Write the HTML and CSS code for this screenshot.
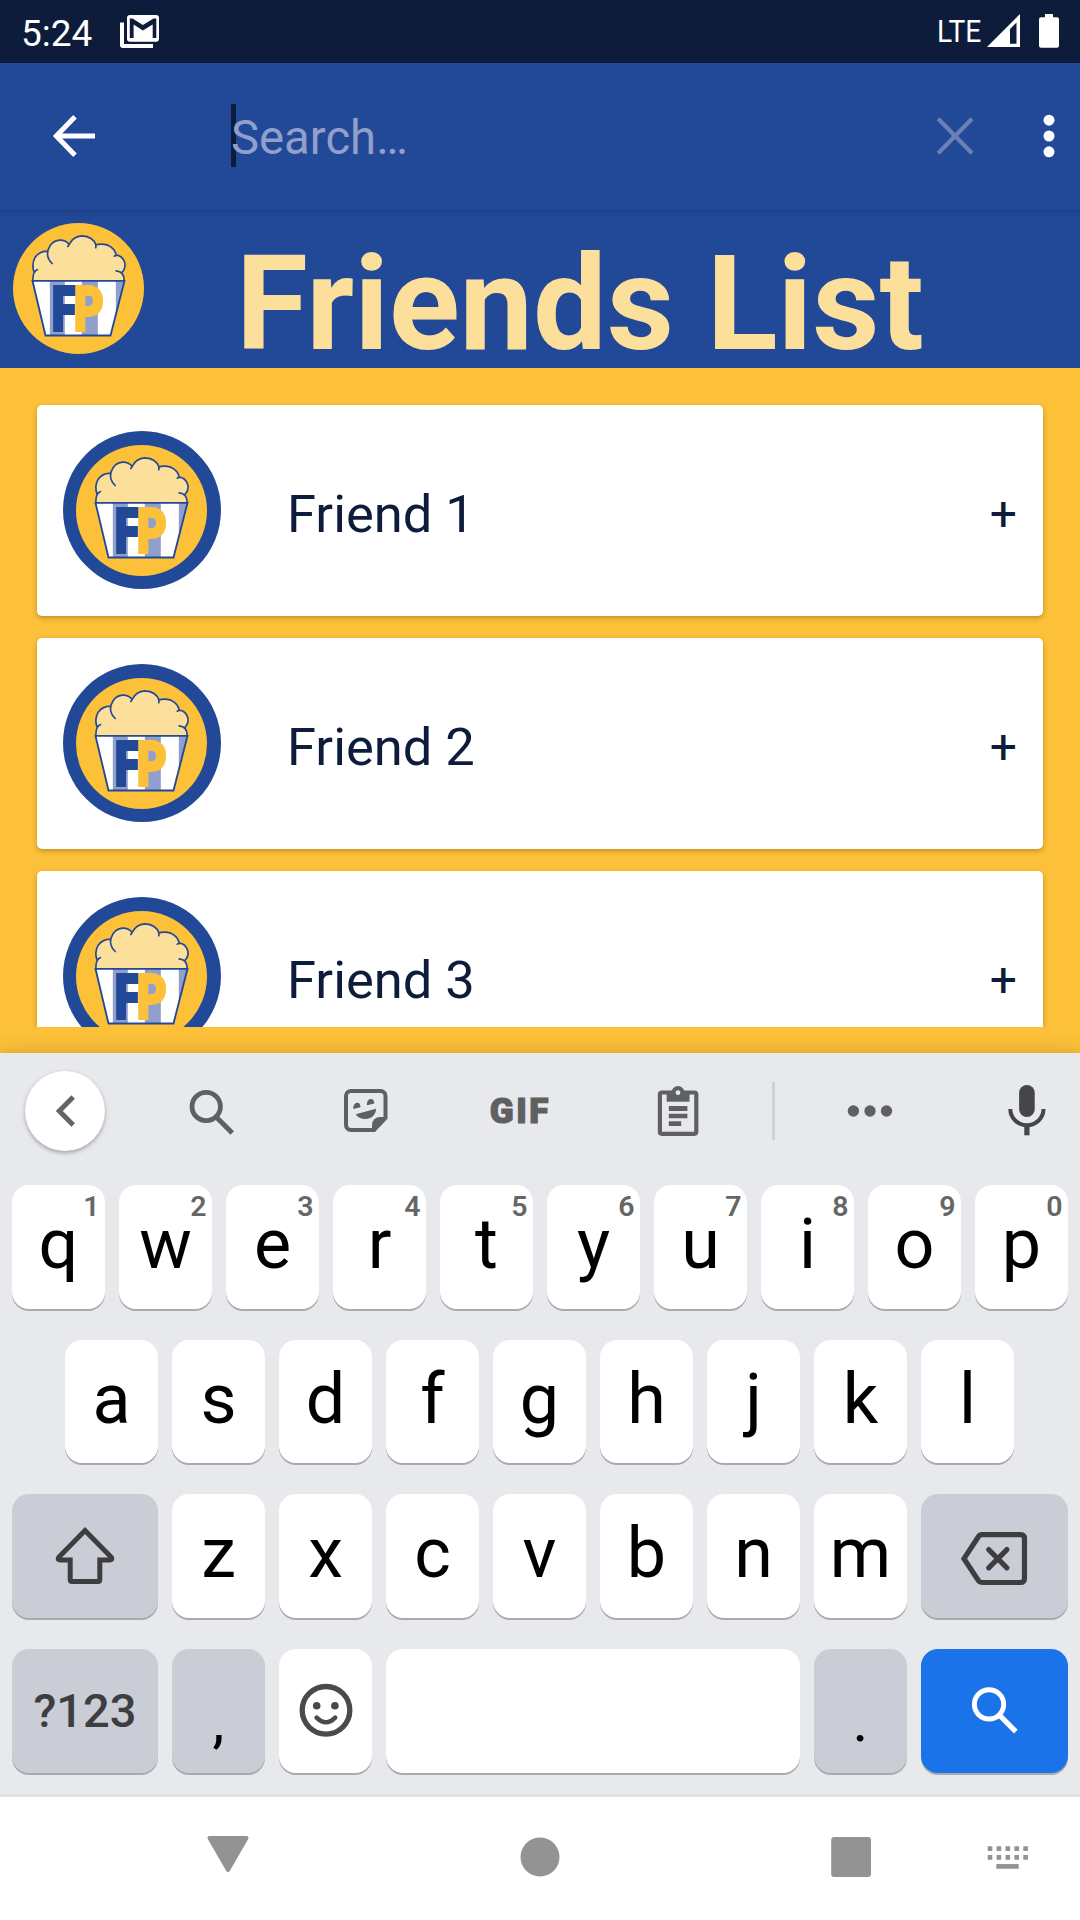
FILE: index.html
```html
<!DOCTYPE html>
<html lang="en">
<head>
<meta charset="utf-8">
<title>Friends List</title>
<link rel="stylesheet" href="styles.css">
</head>
<body>
<svg class="defs" width="0" height="0" aria-hidden="true">
  <defs>
    <clipPath id="bucket"><path d="M98 229H374L332 393H137Z"/></clipPath>
    <symbol id="logo" viewBox="39.5 55.5 393 393">
      <circle cx="236" cy="252" r="196.5" fill="#fcc139"/>
      <path d="M99 228Q99 212 103 204Q94 180 106 158Q120 140 143 140Q148 116 172 108Q194 105 208 121Q220 95 246 94Q280 96 288 121Q305 116 324 122Q346 132 349 153Q368 153 375 175Q378 193 365 206Q374 214 373 228Z" fill="#fddf9c"/>
      <g fill="none" stroke="#224898" stroke-width="5" stroke-linecap="round" stroke-linejoin="round">
        <path d="M99 228Q99 200 113 195M103 204Q94 180 106 158Q120 140 143 140M157 177Q138 160 145 136Q153 110 178 107Q198 106 208 120L204 126M208 120Q220 95 246 94Q280 96 288 121V130M288 121Q305 116 324 122Q346 132 349 152L343 155M349 152Q368 153 375 175Q378 193 365 205M349 199Q373 201 373 228"/>
      </g>
      <g clip-path="url(#bucket)">
        <path d="M98 229H374V393H98Z" fill="#fff"/>
        <path d="M150 229H195V393H150ZM246 229H294V393H246ZM348 229H374V393H348Z" fill="#919fcd"/>
      </g>
      <g class="logo-letters">
        <text transform="translate(154 375) scale(.76 1)" font-size="179" fill="#224898" stroke="#224898" stroke-width="12">F</text>
        <text transform="translate(220 375) scale(.78 1)" font-size="179" fill="#fcc139" stroke="#fcc139" stroke-width="12">P</text>
      </g>
      <path d="M98 229H374L332 393H137Z" fill="none" stroke="#224898" stroke-width="5.500"/>
    </symbol>
    <symbol id="lens" viewBox="0 0 64 64">
      <circle cx="26.200" cy="27.500" r="14.200" fill="none" stroke="currentColor" stroke-width="4.800"/>
      <path d="M36 37.700L52.200 54" fill="none" stroke="currentColor" stroke-width="5"/>
    </symbol>
  </defs>
</svg>

<div class="screen">
  <header class="status-bar">
    <span class="clock">5:24</span>
    <svg class="mail" width="40" height="34" viewBox="0 0 40 34">
      <path d="M0 7.500H4V29H33V33H3Q0 33 0 30Z" fill="#fff"/>
      <rect x="7" y="0" width="32" height="26.700" rx="3" fill="#fff"/>
      <path d="M9.800 23V3.500H12.500L22.900 10L33.500 3.500H36.300V23H32.700V9.500L22.900 15.500L13.600 9.500V23Z" fill="#0d1c3a"/>
    </svg>
    <span class="network">LTE</span>
    <svg class="signal" width="33" height="33" viewBox="0 0 33 33">
      <path d="M0 33H33V0ZM23 29.700V15L29.500 8.500V29.700Z" fill="#fff" fill-rule="evenodd"/>
    </svg>
    <svg class="battery" width="20" height="34" viewBox="0 0 20 34">
      <path d="M6 0H14V3.300H18Q20 3.300 20 5.300V31.700Q20 33.700 18 33.700H2Q0 33.700 0 31.700V5.300Q0 3.300 2 3.300H6Z" fill="#fff"/>
    </svg>
  </header>

  <div class="app-bar">
    <svg class="back" width="48" height="48" viewBox="0 0 48 48">
      <path d="M45 24H7M25 4.800L6.300 24L25 43.200" fill="none" stroke="#fff" stroke-width="5"/>
    </svg>
    <div class="search-field"><span class="caret"></span><span class="placeholder">Search…</span></div>
    <svg class="clear" width="48" height="48" viewBox="0 0 48 48">
      <path d="M7.200 6.700L41 41.300M41 6.700L7.200 41.300" fill="none" stroke="#6a80b7" stroke-width="4.200"/>
    </svg>
    <svg class="more" width="16" height="48" viewBox="0 0 16 48" fill="#fff">
      <circle cx="8" cy="8.200" r="5.500"/><circle cx="8" cy="24" r="5.500"/><circle cx="8" cy="39.800" r="5.500"/>
    </svg>
  </div>

  <div class="title-band">
    <svg class="brand" width="131" height="131"><use href="#logo"/></svg>
    <h1>Friends List</h1>
  </div>

  <main class="friends">
    <div class="list">
      <article class="card">
        <span class="avatar"><svg width="131" height="131"><use href="#logo"/></svg></span>
        <span class="name">Friend 1</span><span class="add">+</span>
      </article>
      <article class="card">
        <span class="avatar"><svg width="131" height="131"><use href="#logo"/></svg></span>
        <span class="name">Friend 2</span><span class="add">+</span>
      </article>
      <article class="card">
        <span class="avatar"><svg width="131" height="131"><use href="#logo"/></svg></span>
        <span class="name">Friend 3</span><span class="add">+</span>
      </article>
    </div>
  </main>

  <section class="keyboard">
    <div class="tools">
      <span class="collapse">
        <svg width="64" height="64" viewBox="0 0 64 64"><path d="M40.200 18L26.300 32L40.200 46" fill="none" stroke="#636466" stroke-width="5"/></svg>
      </span>
      <svg class="find" width="64" height="64"><use href="#lens"/></svg>
      <svg width="64" height="64" viewBox="0 0 64 64" fill="currentColor">
        <path d="M17 12H46.500a5 5 0 0 1 5 5V39L40 51H17a5 5 0 0 1-5-5V17a5 5 0 0 1 5-5Z" fill="none" stroke="currentColor" stroke-width="4"/>
        <path d="M38 52V46A8 8 0 0 1 46 38H53L40.700 53Z"/>
        <path d="M19.300 30C19 26 21 23.700 23.500 23.700C25.500 23.700 26.500 25.500 26.500 28.300ZM33 26.300C32.500 22.500 34.500 20 37 20C39 20 40.300 21.700 40.300 24.500Z"/>
        <path d="M21.700 35.300L42 29.700C42 36 37 40 31.500 40C27 40 23.500 38.500 21.700 35.300Z"/>
      </svg>
      <span class="gif">GIF</span>
      <svg width="64" height="64" viewBox="0 0 64 64" fill="currentColor">
        <rect x="13.900" y="13.500" width="36.400" height="41.300" rx="2" fill="none" stroke="currentColor" stroke-width="4.200"/>
        <path d="M20.700 12H43.500V22.700H20.700Z"/><circle cx="32" cy="13.500" r="6.500"/>
        <circle cx="32" cy="13.700" r="2.400" fill="#e8e9ed"/>
        <path d="M22.800 27H41.400V32H22.800ZM22.800 34.700H41.400V39.300H22.800ZM22.800 42.300H35.200V47H22.800Z"/>
      </svg>
      <span class="divider"></span>
      <svg width="64" height="64" viewBox="0 0 64 64" fill="currentColor">
        <circle cx="15.400" cy="32" r="5.700"/><circle cx="32" cy="32" r="5.700"/><circle cx="48.500" cy="32" r="5.700"/>
      </svg>
      <svg class="mic" width="64" height="64" viewBox="0 0 64 64">
        <rect x="24.100" y="6" width="15.600" height="32" rx="7.800" fill="currentColor"/>
        <path d="M15.300 30A16.600 16.200 0 0 0 48.500 30" fill="none" stroke="currentColor" stroke-width="4"/>
        <path d="M29.300 45H34.500V56.300H29.300Z" fill="currentColor"/>
      </svg>
    </div>

    <div class="keys">
      <div class="row">
        <span class="key">q<sup>1</sup></span><span class="key">w<sup>2</sup></span><span class="key">e<sup>3</sup></span><span class="key">r<sup>4</sup></span><span class="key">t<sup>5</sup></span><span class="key">y<sup>6</sup></span><span class="key">u<sup>7</sup></span><span class="key">i<sup>8</sup></span><span class="key">o<sup>9</sup></span><span class="key">p<sup>0</sup></span>
      </div>
      <div class="row home">
        <span class="key">a</span><span class="key">s</span><span class="key">d</span><span class="key">f</span><span class="key">g</span><span class="key">h</span><span class="key">j</span><span class="key">k</span><span class="key">l</span>
      </div>
      <div class="row">
        <span class="key wide grey">
          <svg width="64" height="64" viewBox="0 0 64 64"><path d="M32 6.500L58.300 33.200Q60 36 57 36H46.800V55.500Q46.800 57.500 44.800 57.500H19.200Q17.200 57.500 17.200 55.500V36H7Q4 36 5.700 33.200Z" fill="none" stroke="#3e3e40" stroke-width="5"/></svg>
        </span>
        <span class="key">z</span><span class="key">x</span><span class="key">c</span><span class="key">v</span><span class="key">b</span><span class="key">n</span><span class="key">m</span>
        <span class="key wide grey">
          <svg width="72" height="64" viewBox="0 0 72 64" fill="none" stroke="#3e3e40" stroke-width="5.200"><path d="M5 34.700L19.500 12.500Q20.700 10.700 23 10.700H61.500Q65.500 10.700 65.500 14.700V54.500Q65.500 58.500 61.500 58.500H23Q20.700 58.500 19.500 56.800Z"/><path d="M29.700 25.600L47.900 43.800M47.900 25.600L29.700 43.800" stroke-linecap="round"/></svg>
        </span>
      </div>
      <div class="row">
        <span class="key wide grey symbols">?123</span>
        <span class="key grey punct">,</span>
        <span class="key">
          <svg width="64" height="64" viewBox="0 0 64 64" fill="#4a4a4a"><circle cx="32" cy="31.300" r="23.800" fill="none" stroke="#4a4a4a" stroke-width="5.300"/><circle cx="22.700" cy="26.700" r="3.800"/><circle cx="40.900" cy="26.700" r="3.800"/><path d="M22.600 38.700Q32 48 41.200 38.700" fill="none" stroke="#4a4a4a" stroke-width="4.500" stroke-linecap="round"/></svg>
        </span>
        <span class="key space"></span>
        <span class="key grey punct">.</span>
        <span class="key wide go"><svg width="66" height="66"><use href="#lens"/></svg></span>
      </div>
    </div>
  </section>

  <nav class="nav-bar">
    <svg width="64" height="64" viewBox="0 0 64 64"><path d="M13.500 13H50.500L32 45Z" fill="#939393" stroke="#939393" stroke-width="4" stroke-linejoin="round"/></svg>
    <svg width="64" height="64" viewBox="0 0 64 64"><circle cx="32" cy="32" r="19.500" fill="#939393"/></svg>
    <svg class="recents" width="64" height="64" viewBox="0 0 64 64"><rect x="12.200" y="12" width="39.800" height="40" rx="3" fill="#939393"/></svg>
    <svg class="ime" width="64" height="64" viewBox="0 0 64 64"><path d="M11.700 23.600H52M11.700 32.400H52" stroke="#939393" stroke-width="4.700" stroke-dasharray="4.600 4.300"/><path d="M20.300 41.400H42.700" stroke="#939393" stroke-width="4.700"/></svg>
  </nav>
</div>
</body>
</html>
```
FILE: styles.css
```css
* { box-sizing: border-box; }

body {
  margin: 0;
  font-family: Roboto, "Liberation Sans", sans-serif;
  background: #fcc139;
}

svg { display: block; flex: none; }

.defs { position: absolute; }

.logo-letters { font-family: Lato, sans-serif; font-weight: 900; }

.screen {
  width: 1080px;
  height: 1920px;
  display: flex;
  flex-direction: column;
  overflow: hidden;
}

/* status bar */
.status-bar {
  height: 63px;
  flex: none;
  display: flex;
  align-items: flex-start;
  padding: 14px 21px 0 21px;
  background: #0d1c3a;
  color: #fff;
}
.clock { width: 99px; font-size: 37px; line-height: 40px; }
.mail { margin-top: 1px; }
.network {
  margin-left: auto;
  width: 44px;
  font-size: 32px;
  line-height: 34px;
  transform: scaleX(.88);
  transform-origin: left;
}
.signal { margin: 0 19px 0 6px; }

/* app bar */
.app-bar {
  height: 147px;
  flex: none;
  display: flex;
  align-items: center;
  padding: 0 23px 0 49.5px;
  background: #224898;
  box-shadow: 0 1px 7px rgba(13, 28, 58, .3);
  z-index: 1;
}
.back { margin-top: -1px; }
.more { margin-top: -1px; }
.search-field {
  flex: 1;
  display: flex;
  align-items: center;
  margin-left: 133.5px;
  font-size: 47.25px;
  line-height: 63px;
  color: #919fcb;
}
.caret { width: 5px; height: 63px; margin: -2px -5px 0 0; background: #0d1c3a; }
.placeholder { position: relative; padding-top: 4px; }
.clear { margin: -1px 62px 0 0; }

/* heading */
.title-band {
  height: 158px;
  flex: none;
  display: flex;
  padding: 13px 0 0 13px;
  background: #224898;
}
h1 {
  margin: 4px 0 0 92px;
  font-size: 131px;
  line-height: 154px;
  font-weight: 700;
  color: #fddf9c;
  white-space: nowrap;
}

/* friend cards */
.friends { height: 685px; flex: none; background: #fcc139; }
.list {
  height: 659px;
  padding: 37px 37px 0;
  display: flex;
  flex-direction: column;
  gap: 22px;
  overflow: hidden;
}
.card {
  height: 211px;
  flex: none;
  display: flex;
  align-items: center;
  padding: 0 26px;
  border-radius: 5px;
  background: #fff;
  box-shadow: 0 2px 5px rgba(80, 50, 0, .35);
  color: #0d1c3a;
}
.avatar {
  width: 158px;
  height: 158px;
  margin-top: -1px;
  display: grid;
  place-items: center;
  border-radius: 50%;
  background: #224898;
}
.avatar svg { margin-left: -1px; }
.name { margin-left: 66px; padding-top: 6px; font-size: 52.5px; line-height: 62px; }
.add { margin-left: auto; padding-top: 6px; font-size: 48px; line-height: 62px; }

/* keyboard */
.keyboard {
  height: 741px;
  flex: none;
  background: #e8e9ed;
  box-shadow: 0 0 18px rgba(80, 50, 0, .22);
}
.tools {
  height: 116px;
  display: grid;
  grid-template-columns: 130.8px 161.2px 148px 160.8px 154.4px 36.8px 156px 132px;
  place-items: center;
  color: #5f6062;
}
.collapse {
  width: 80px;
  height: 80px;
  margin-top: -1px;
  display: grid;
  place-items: center;
  border-radius: 50%;
  background: #fff;
  box-shadow: 0 2px 4px rgba(0, 0, 0, .3);
}
.find { margin-left: 1.5px; }
.gif { font-size: 35px; font-weight: 900; letter-spacing: 2.5px; -webkit-text-stroke: 1.2px; }
.divider { width: 2.5px; height: 58px; background: #cfd1d4; }
.mic { justify-self: end; margin-right: 20.5px; color: #454648; }

.keys {
  padding: 16px 12px 0;
  display: flex;
  flex-direction: column;
  gap: 31px;
}
.row { height: 123.7px; display: flex; gap: 14px; }
.home { padding-left: 53px; }
.key {
  position: relative;
  width: 93px;
  height: 123.7px;
  flex: none;
  display: flex;
  align-items: center;
  justify-content: center;
  border-radius: 17px;
  background: #fff;
  box-shadow: 0 2px 0 #a9aaad;
  color: #000;
  font-size: 70px;
  line-height: 118px;
  padding-bottom: 6px;
}
.key svg { margin-top: 6px; }
.wide { width: 146px; }
.wide:last-child { width: 147px; }
.grey { background: #cbcdd6; }
.space { width: 414px; }
.symbols { font-size: 47px; font-weight: 500; color: #3e3e40; padding-bottom: 0; }
.punct { font-size: 60px; padding: 20px 0 0; }
.go { background: #1b73e9; color: #fff; padding-bottom: 10px; }
sup {
  position: absolute;
  top: 8px;
  right: 5.5px;
  font-size: 28.5px;
  line-height: 28px;
  font-weight: 600;
  color: #666;
}

/* system navigation */
.nav-bar {
  height: 126px;
  flex: none;
  display: flex;
  gap: 248px;
  padding: 28px 0 0 196px;
  border-top: 3px solid #dfe1e2;
  background: #fff;
}
.recents { margin-left: -1px; }
.ime { margin-left: -155px; }
```
